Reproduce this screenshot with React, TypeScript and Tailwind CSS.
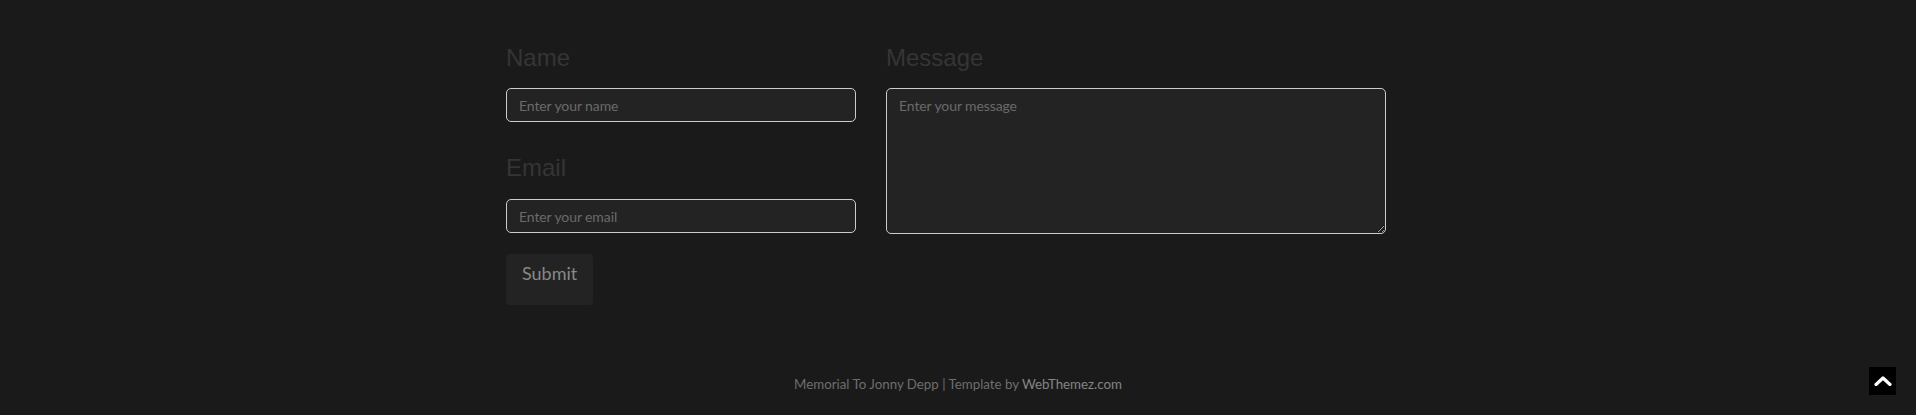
import React from "react";

export default function App() {
  const labelCls =
    "block text-[24px] leading-[27px] text-[#353535] font-['Liberation_Sans',Arial,sans-serif]";
  const fieldCls =
    "w-full bg-[#232323] border border-[#cccccc] rounded-[5px] px-[12px] text-[14px] text-[#999] placeholder:text-[#6a6a6a] outline-none font-['Lato',sans-serif] tracking-[-0.1px]";
  return (
    <div className="relative min-h-[415px] bg-[#1a1a1a] font-['Lato',sans-serif]">
      <div className="w-[1170px] mx-auto pl-[133px] pt-[44px]">
        <div className="flex gap-[30px]">
          <div className="w-[350px] flex flex-col items-start">
            <label className={labelCls}>Name</label>
            <input
              type="text"
              placeholder="Enter your name"
              className={`${fieldCls} mt-[17px] h-[34px]`}
            />
            <label className={`${labelCls} mt-[32px]`}>Email</label>
            <input
              type="email"
              placeholder="Enter your email"
              className={`${fieldCls} mt-[18px] h-[34px]`}
            />
            <button className="mt-[21px] h-[51px] px-[16px] pt-[7px] flex items-start bg-[#232323] rounded-[4px] text-[18px] leading-[24px] text-[#888888] font-['Lato',sans-serif]">
              Submit
            </button>
          </div>
          <div className="w-[500px] flex flex-col">
            <label className={labelCls}>Message</label>
            <textarea
              placeholder="Enter your message"
              className={`${fieldCls} mt-[17px] h-[146px] pt-[6px] block`}
            />
          </div>
        </div>
      </div>
      <footer className="mt-[69px] text-center text-[13.3px] leading-[20px] text-[#6e6e6e]">
        Memorial To Jonny Depp | Template by{" "}
        <a className="text-[#858585]">WebThemez.com</a>
      </footer>
      <button className="absolute right-[20px] bottom-[20px] w-[27px] h-[28px] bg-black flex items-center justify-center">
        <svg width="18" height="10" viewBox="0 0 18 10">
          <path
            d="M2 8.5 L9 2 L16 8.5"
            stroke="#fff"
            strokeWidth="3.2"
            fill="none"
            strokeLinecap="round"
            strokeLinejoin="round"
          />
        </svg>
      </button>
    </div>
  );
}
